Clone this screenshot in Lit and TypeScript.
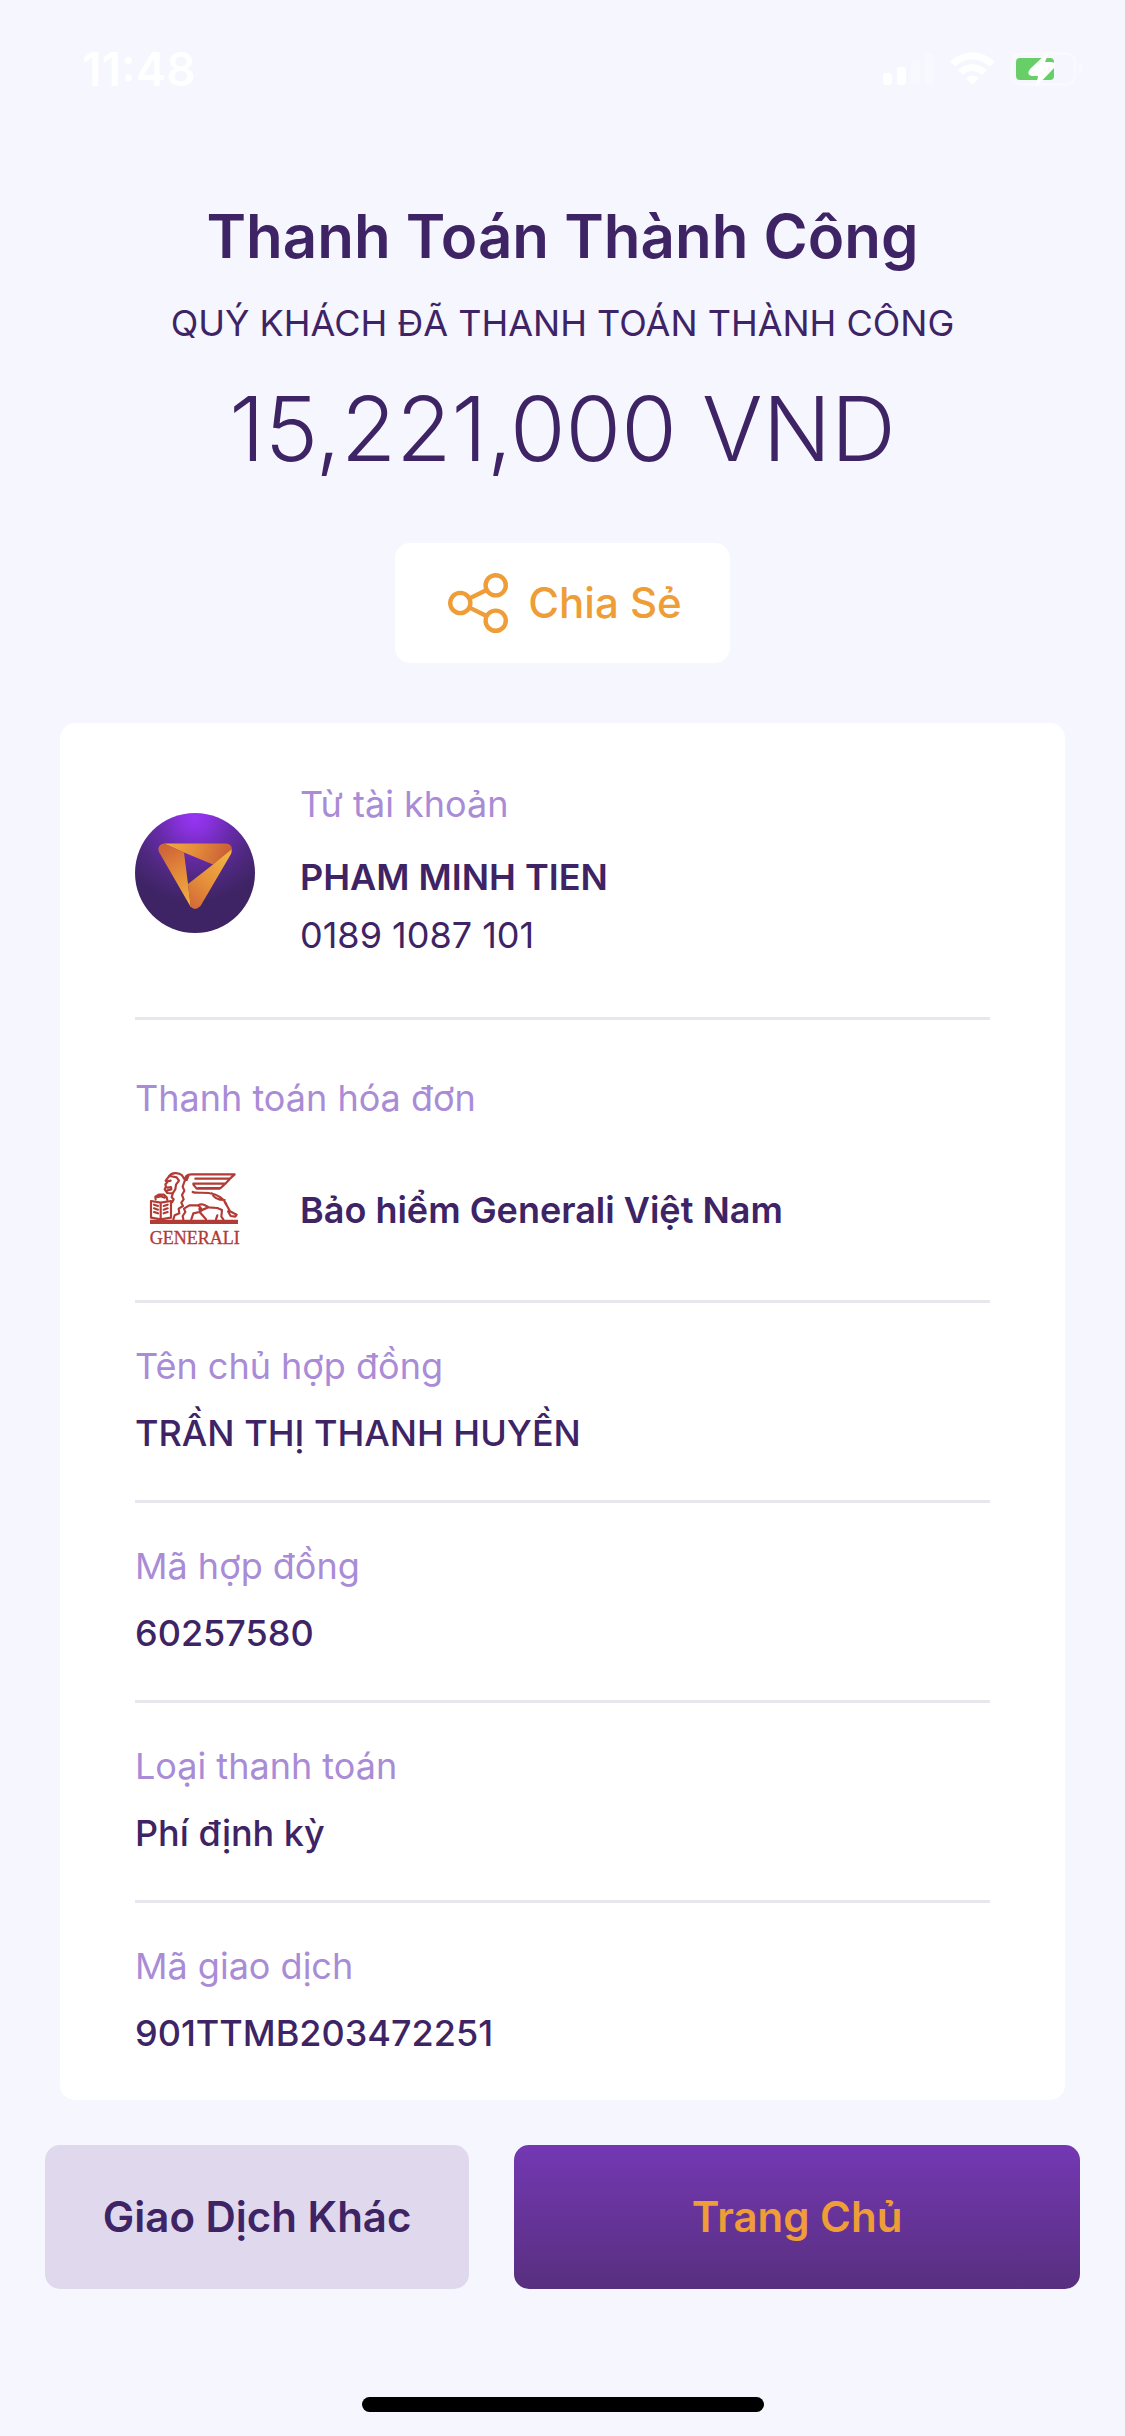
import { LitElement, html, css } from "lit";
import { customElement } from "lit/decorators.js";

const shareIcon = html`<svg class="share-icon" viewBox="0 0 60 60" fill="none" stroke="#ee9d37" stroke-width="4.4" aria-hidden="true">
  <circle cx="12.3" cy="30" r="10.1" /><circle cx="47.7" cy="12.3" r="10.1" /><circle cx="47.7" cy="47.7" r="10.1" />
  <path d="M21.5 25.4 38.6 17M21.5 34.6 38.6 43" />
</svg>`;

const bankLogo = html`<svg class="logo" viewBox="0 0 120 120" aria-hidden="true">
  <defs>
    <radialGradient id="disc" cx="60" cy="4" r="94" gradientUnits="userSpaceOnUse">
      <stop offset="0" stop-color="#9635f6" /><stop offset=".15" stop-color="#8a31e0" /><stop offset=".4" stop-color="#682bab" />
      <stop offset=".65" stop-color="#4f2880" /><stop offset=".9" stop-color="#3e2465" />
    </radialGradient>
    <linearGradient id="top" x1="32" y1="30" x2="90" y2="50" gradientUnits="userSpaceOnUse">
      <stop offset="0" stop-color="#f0aa3e" /><stop offset=".45" stop-color="#e58f3a" /><stop offset="1" stop-color="#c95f37" />
    </linearGradient>
    <linearGradient id="left" x1="26" y1="38" x2="56" y2="90" gradientUnits="userSpaceOnUse">
      <stop offset="0" stop-color="#cf6637" /><stop offset=".5" stop-color="#e58d3a" /><stop offset="1" stop-color="#f0b040" />
    </linearGradient>
    <linearGradient id="right" x1="92" y1="44" x2="54" y2="90" gradientUnits="userSpaceOnUse">
      <stop offset="0" stop-color="#f2b040" /><stop offset=".55" stop-color="#e5903a" /><stop offset="1" stop-color="#d46c37" />
    </linearGradient>
  </defs>
  <circle cx="60" cy="60" r="60" fill="url(#disc)" />
  <path fill="url(#top)" d="M29 30.500H91Q97 30.500 97 37L95 39.500 78 51.500 49 39.500Z" />
  <path fill="url(#left)" d="M29 30.500 49 39.500 53 71 56 94.500 24 39Q21.500 32 29 30.500Z" />
  <path fill="url(#right)" d="M96.500 36.500Q97 39 96 41L65.500 93Q60 98.500 55.500 93.500L53 71 78 51.500Z" />
</svg>`;

const insurerLogo = html`<svg class="logo" viewBox="15 0 360 360" role="img" aria-label="Generali">
  <g fill="none" stroke="#b23b35" stroke-width="6.500" stroke-linejoin="round" stroke-linecap="round">
    <path d="M118 78C124 68 146 66 156 76L165 90 158 110 163 122 156 135 161 148 154 158 159 168 146 176 148 190 134 196 130 208" />
    <path d="M118 78 107 92 112 97 106 103 108 109 104 118 112 129 128 130 136 118 138 104M120 78 140 82 147 92 138 104M112 94 122 92M112 113 123 111 124 118 112 121" />
    <path d="M128 131 125 142 131 148 127 156" />
    <path d="M165 92C164 80 170 73 184 73H314L300 86H196M300 86 286 101H190M286 101 272 114H204M272 114 268 116H200L190 104M176 76 170 90" />
    <path d="M188 126C196 130 216 127 236 129 262 132 284 146 290 166L300 184 320 194 316 200 302 198 294 184M246 130C252 146 266 150 284 150M290 166 284 156" />
    <path d="M160 208 158 198 166 186 162 176 178 166 204 166C216 160 222 164 236 172M204 166C216 174 216 182 208 186L190 190 184 208M208 176 212 190 228 208M236 172C228 176 216 178 214 182M236 172 262 174 276 180 274 200 280 208M258 208 262 196" />
    <path d="M77 148 76 140 86 134H102L110 142 112 150M76 142 92 139 104 143" />
    <path d="M63 153 92 158 123 153V203L92 208 63 203ZM92 158V207M72 164 84 168M101 168 113 164M72 175 84 179M101 179 113 175M72 186 84 190M101 190 113 186" />
  </g>
  <path fill="#b23b35" d="M60 209H324V222H60z" />
  <text x="59" y="281" class="wordmark">GENERALI</text>
</svg>`;

const rows = [
  ["Tên chủ hợp đồng", "TRẦN THỊ THANH HUYỀN"],
  ["Mã hợp đồng", "60257580"],
  ["Loại thanh toán", "Phí định kỳ"],
  ["Mã giao dịch", "901TTMB203472251"],
];

@customElement("app-root")
export class AppRoot extends LitElement {
  static styles = css`
    :host {
      display: flex;
      flex-direction: column;
      box-sizing: border-box;
      min-height: 100vh;
      background: #f5f6fe;
      color: #3e2465;
      font-family: Inter, "Liberation Sans", sans-serif;
      font-size: 36px;
      line-height: 44px;
    }
    .status {
      display: flex;
      justify-content: space-between;
      align-items: center;
      height: 138px;
      padding: 0 42px 0 82px;
      box-sizing: border-box;
      color: #fff;
    }
    .time { font-size: 46px; font-weight: 600; }
    .status-icons { width: 200px; height: 36px; }
    .head {
      display: flex;
      flex-direction: column;
      align-items: center;
      padding: 62px 45px 60px;
      text-align: center;
    }
    h1, p, dl, dt, dd { margin: 0; }
    h1 { font-size: 60px; line-height: 72px; font-weight: 600; }
    .lead { margin-top: 29px; }
    .amount { margin-top: 30px; font-size: 90px; line-height: 108px; font-weight: 300; }
    button {
      border: 0;
      font: inherit;
      font-size: 42px;
      border-radius: 15px;
      cursor: pointer;
    }
    .share {
      display: flex;
      align-items: center;
      gap: 20px;
      height: 120px;
      margin-top: 60px;
      padding: 0 48px 0 53px;
      background: #fff;
      color: #ee9d37;
      font-weight: 500;
    }
    .share-icon { width: 60px; height: 60px; }
    .card {
      margin: 0 60px;
      padding: 0 75px;
      border-radius: 15px;
      background: #fff;
    }
    .section { border-bottom: 3px solid #e8e7ee; }
    .section:last-child { border-bottom: 0; }
    .label { color: #a98bd6; }
    .value { font-weight: 600; }
    .account { display: flex; align-items: flex-end; gap: 45px; padding: 59px 0 60px; }
    .account .value { margin: 29px 0 14px; }
    .account .logo { margin-bottom: 24px; }
    .logo { width: 120px; height: 120px; flex: none; }
    .biller { padding: 56px 0 30px; }
    .biller-row { display: flex; align-items: center; gap: 45px; margin-top: 30px; }
    .wordmark {
      font-family: "Liberation Serif", serif;
      font-size: 54px;
      fill: #b23b35;
      stroke: #b23b35;
      stroke-width: 1px;
    }
    .pair { padding: 41px 0 45px; }
    .pair .value { margin-top: 23px; font-weight: 500; }
    .actions {
      display: grid;
      grid-template-columns: 3fr 4fr;
      gap: 45px;
      padding: 45px 45px 0;
    }
    .actions button { height: 144px; font-weight: 600; }
    .other { background: #e0d9ed; color: #3e2465; }
    .home { background: linear-gradient(#7438b3, #582f7f); color: #ee9d37; }
    .indicator {
      width: 402px;
      height: 15px;
      margin: auto auto 24px;
      border-radius: 8px;
      background: #000;
    }
  `;

  render() {
    return html`
      <div class="status">
        <span class="time">11:48</span>
        <svg class="status-icons" viewBox="0 0 200 36" aria-hidden="true">
          <g fill="#fff">
            <rect x="0" y="22" width="9" height="12" rx="3" />
            <rect x="14" y="16" width="9" height="18" rx="3" />
            <rect x="28" y="9" width="9" height="25" rx="3" opacity=".3" />
            <rect x="42" y="2" width="9" height="32" rx="3" opacity=".3" />
            <path d="M67 10.500Q89 -8 112 10.500L107 15.500Q89 1 72 15.500ZM75 19Q89 7 104 19L99 24Q89 16 80 24ZM83 27Q89 22 96 27L89.500 34Z" />
            <path d="M196 12q8 6 0 12z" opacity=".4" />
          </g>
          <rect x="129" y="2.500" width="63" height="31" rx="9" fill="none" stroke="#fff" stroke-width="3" opacity=".4" />
          <rect x="133" y="7" width="38" height="22" rx="4" fill="#68ce67" />
          <path fill="#fff" d="M165 1 147 18q-4 6 2 7h6l-2 11 18-19q3-6-3-6h-6l4-10z" />
        </svg>
      </div>
      <header class="head">
        <h1>Thanh Toán Thành Công</h1>
        <p class="lead">QUÝ KHÁCH ĐÃ THANH TOÁN THÀNH CÔNG</p>
        <p class="amount">15,221,000 VND</p>
        <button class="share" type="button">${shareIcon}<span>Chia Sẻ</span></button>
      </header>
      <main class="card">
        <section class="section account">
          ${bankLogo}
          <div>
            <p class="label">Từ tài khoản</p>
            <p class="value">PHAM MINH TIEN</p>
            <p>0189 1087 101</p>
          </div>
        </section>
        <section class="section biller">
          <p class="label">Thanh toán hóa đơn</p>
          <div class="biller-row">${insurerLogo}<p class="value">Bảo hiểm Generali Việt Nam</p></div>
        </section>
        <dl>
          ${rows.map(([label, value]) => html`<div class="section pair"><dt class="label">${label}</dt><dd class="value">${value}</dd></div>`)}
        </dl>
      </main>
      <nav class="actions">
        <button class="other" type="button">Giao Dịch Khác</button>
        <button class="home" type="button">Trang Chủ</button>
      </nav>
      <div class="indicator"></div>
    `;
  }
}
